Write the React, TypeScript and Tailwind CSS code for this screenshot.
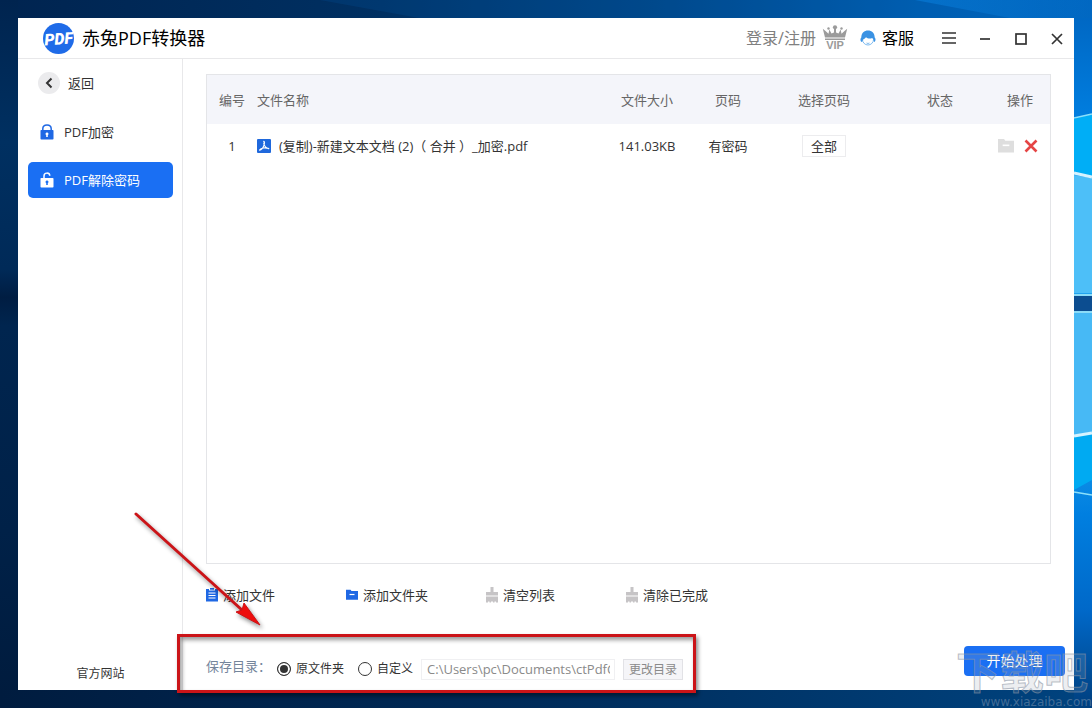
import { useState } from "react";
import type { ReactNode } from "react";

const NAV_ITEMS = [
  { id: "encrypt", label: "PDF加密", open: false },
  { id: "decrypt", label: "PDF解除密码", open: true },
];

const FILES = [
  { id: 1, name: "(复制)-新建文本文档 (2)（ 合并 ）_加密.pdf", size: "141.03KB", pages: "有密码" },
];

function Wallpaper() {
  return (
    <svg className="absolute inset-0 h-full w-full" viewBox="0 0 1092 708" preserveAspectRatio="none" aria-hidden="true">
      <defs>
        <linearGradient id="sky" x1="0" y1="0" x2="1" y2="0">
          <stop offset="0" stopColor="#002450" />
          <stop offset="0.35" stopColor="#003062" />
          <stop offset="0.6" stopColor="#004585" />
          <stop offset="0.85" stopColor="#0060b4" />
          <stop offset="1" stopColor="#0068c4" />
        </linearGradient>
        <linearGradient id="left" x1="0" y1="0" x2="0" y2="1">
          <stop offset="0" stopColor="#00244f" />
          <stop offset="0.2" stopColor="#003061" />
          <stop offset="0.38" stopColor="#002a58" />
          <stop offset="0.42" stopColor="#001d42" />
          <stop offset="0.46" stopColor="#00254f" />
          <stop offset="0.75" stopColor="#002148" />
          <stop offset="1" stopColor="#001b3d" />
        </linearGradient>
        <linearGradient id="ground" x1="0" y1="0" x2="1" y2="0">
          <stop offset="0" stopColor="#001c3f" />
          <stop offset="0.45" stopColor="#002a57" />
          <stop offset="1" stopColor="#00437f" />
        </linearGradient>
        <linearGradient id="beam" x1="0" y1="0" x2="1" y2="0">
          <stop offset="0" stopColor="#0a84e4" stopOpacity="0.5" />
          <stop offset="1" stopColor="#0a84e4" stopOpacity="0.1" />
        </linearGradient>
        <linearGradient id="right" x1="0" y1="0" x2="0" y2="1">
          <stop offset="0" stopColor="#0068c4" />
          <stop offset="0.16" stopColor="#0080e2" />
          <stop offset="0.5" stopColor="#2fb2f5" />
          <stop offset="0.72" stopColor="#007fe0" />
          <stop offset="0.86" stopColor="#0068c8" />
          <stop offset="1" stopColor="#003f7e" />
        </linearGradient>
      </defs>
      <rect width="1092" height="708" fill="url(#sky)" />
      <path d="M320 0 L430 20 H1092 V0 Z" fill="#0059a8" opacity="0.2" />
      <path d="M915 0 L1020 20 H1092 V0 Z" fill="url(#beam)" />
      <rect width="18" height="708" fill="url(#left)" />
      <rect y="690" width="1092" height="18" fill="url(#ground)" />
      <rect x="1074" y="18" width="18" height="690" fill="url(#right)" />
      <path d="M1074 119 L1092 114 V176 L1074 172 Z" fill="#00aef6" />
      <path d="M1074 175 L1092 178 V293 H1074 Z" fill="#4dbff8" />
      <path d="M1074 313 H1092 V432 L1074 435 Z" fill="#47b9f5" />
      <path d="M1074 436 L1092 433 V480 L1074 490 Z" fill="#00aaf2" />
      <rect x="1074" y="296" width="18" height="15" fill="#0c4d90" />
      <path d="M1074 118 L1092 114 M1074 492 L1092 495" stroke="#8be0fb" strokeWidth="1.5" />
      <path d="M1074 173 L1092 177 M1074 436 L1092 433" stroke="#d5f3ff" strokeWidth="3" />
      <path d="M1074 295 H1092 M1074 312 H1092" stroke="#8cdcf8" strokeWidth="2" />
    </svg>
  );
}

function Logo() {
  return (
    <svg width="32" height="32" viewBox="0 0 32 32" aria-hidden="true">
      <circle cx="16.500" cy="16.500" r="15.500" fill="#1f6be8" />
      <text x="16.500" y="22.500" textAnchor="middle" transform="rotate(-4 16 16)" fill="#fff" fontFamily="Roboto, sans-serif" fontSize="16" fontWeight="900" fontStyle="italic">
        PDF
      </text>
    </svg>
  );
}

function VipIcon() {
  return (
    <svg width="26" height="26" viewBox="0 0 26 26" fill="#9b9b9b" aria-hidden="true">
      <circle cx="13" cy="2.300" r="2.100" />
      <circle cx="6.500" cy="3.500" r="1.200" />
      <circle cx="19.500" cy="3.500" r="1.200" />
      <path d="M0.800 3.800 L3.500 6 L6.500 8.800 L7.300 4.500 L9.500 8.500 L12 7.500 V4 H14 V7.500 L16.500 8.500 L18.700 4.500 L19.500 8.800 L22.500 6 L25.200 3.800 L23 12.500 H3 Z" />
      <path d="M3 13.500 H23 V15 H3 Z" />
      <text x="13" y="24" textAnchor="middle" fontFamily="Liberation Sans, sans-serif" fontSize="11" fontWeight="700">
        VIP
      </text>
    </svg>
  );
}

function ServiceIcon() {
  return (
    <svg width="16" height="16" viewBox="0 0 16 16" aria-hidden="true">
      <circle cx="8" cy="9.500" r="5.500" fill="#fff" stroke="#7fbcf0" strokeWidth="1" />
      <path d="M2 12 C0 11.500 0.200 8.500 1.300 7.500 C1.300 3 4.300 0.500 8 0.500 C11.700 0.500 14.700 3 14.700 7.500 C15.800 8.500 16 11.500 14 12 C13.900 10.500 13.300 9 12.200 8 C9.800 9 7.300 8.400 6 7.200 C5.300 8.500 3.600 8.900 3 9.800 C2.600 10.500 2.500 11.300 2 12 Z" fill="#3a92e3" />
      <path d="M6.500 13 Q8 14 9.500 13" stroke="#7fbcf0" fill="none" />
    </svg>
  );
}

function LockIcon({ open }: { open: boolean }) {
  return (
    <svg width="14" height="16" viewBox="0 0 14 16" fill="none" aria-hidden="true">
      <path
        d={open ? "M4 7 V4 C4 0.200 9.600 0.200 9.800 3.800" : "M2.800 6 V4.800 C2.800 -0.300 11.200 -0.300 11.200 4.800 V6"}
        stroke="currentColor"
        strokeWidth="1.500"
      />
      <rect x="0.500" y="6" width="13" height="9.500" rx="0.800" fill="currentColor" />
      <path d="M7 8.500 a1.400 1.400 0 0 1 0.800 2.600 V13 H6.200 V11.100 A1.400 1.400 0 0 1 7 8.500 Z" fill={open ? "#1a6ff3" : "#fff"} />
    </svg>
  );
}

function PdfIcon() {
  return (
    <svg width="14" height="14" viewBox="0 0 14 14" aria-hidden="true">
      <rect width="14" height="14" rx="1" fill="#1f68dc" />
      <path d="M6.600 2.300 C8 2.300 7.400 5.200 6.700 6.900 C6 8.800 4 11 2.600 11.200 M2.500 11 C4 8.800 8.500 8.200 11.800 9.600 M6.700 4 C7 6.500 8.800 8.800 11.600 9.600" stroke="#fff" strokeWidth="1.100" fill="none" strokeLinecap="round" />
    </svg>
  );
}

function FolderIcon({ size }: { size: number }) {
  return (
    <svg width={size} height={size} viewBox="0 0 12 12" aria-hidden="true">
      <path d="M0 0.800 H4.500 L5.500 2 H12 V10.800 H0 Z" fill="currentColor" />
      <path d="M3.500 5.500 H8.500" stroke="#fff" strokeWidth="1.200" />
    </svg>
  );
}

function ClipboardIcon() {
  return (
    <svg width="12" height="14" viewBox="0 0 12 14" aria-hidden="true">
      <rect y="1" width="12" height="12.500" fill="#1f68e4" />
      <rect x="3" y="0" width="6" height="2.500" fill="#fff" />
      <rect x="4" y="0" width="4" height="1.700" fill="#1f68e4" />
      <path d="M2.500 5 H9.500 M2.500 7.500 H9.500 M2.500 10 H9.500" stroke="#fff" strokeWidth="1.100" />
    </svg>
  );
}

function BroomIcon() {
  return (
    <svg width="12" height="16" viewBox="0 0 12 16" fill="#c6c4c6" aria-hidden="true">
      <path d="M4.500 0 H7.500 V5 H12 V8.500 H0 V5 H4.500 Z" />
      <path d="M0 9.500 H12 V15.500 H10 V14.500 H8.500 V15.500 H7 V14.500 H5 V15.500 H3.500 V14.500 H2 V15.500 H0 Z" />
    </svg>
  );
}

function WindowButton({ label, children }: { label: string; children: ReactNode }) {
  return (
    <button type="button" aria-label={label} className="flex h-8 w-9 items-center justify-center text-[#333]">
      <svg width="16" height="16" viewBox="0 0 16 16" fill="none" stroke="currentColor" strokeWidth="1.700" aria-hidden="true">
        {children}
      </svg>
    </button>
  );
}

function ActionButton({ label, icon }: { label: string; icon: ReactNode }) {
  return (
    <button type="button" className="flex w-[140px] items-center gap-[5px]">
      {icon}
      {label}
    </button>
  );
}

export default function App() {
  const [active, setActive] = useState("decrypt");
  const [target, setTarget] = useState("source");

  return (
    <div className="relative flex min-h-screen overflow-hidden bg-[#002a57] p-[18px] font-['Open_Sans','Noto_Sans_CJK_SC',sans-serif] text-[13px] leading-5 text-[#333]">
      <Wallpaper />

      <div className="relative flex flex-1 flex-col bg-white">
        <header className="flex h-[41px] items-center border-b border-[#e8e8ea] pl-6">
          <Logo />
          <h1 className="ml-2 text-[18px] leading-6 text-black">赤兔PDF转换器</h1>
          <button type="button" className="ml-auto flex items-center gap-1.5 text-[16px] leading-6 text-[#808080]">
            登录/注册
            <VipIcon />
          </button>
          <button type="button" className="mr-[17px] ml-3 flex items-center gap-1.5 text-[16px] leading-6 text-black">
            <ServiceIcon />
            客服
          </button>
          <div className="-mr-px flex">
            <WindowButton label="菜单">
              <path d="M1 3 H15 M1 8 H15 M1 13 H15" />
            </WindowButton>
            <WindowButton label="最小化">
              <path d="M3 9 H13" />
            </WindowButton>
            <WindowButton label="最大化">
              <rect x="3" y="4" width="10" height="10" />
            </WindowButton>
            <WindowButton label="关闭">
              <path d="M3 4 L13 14 M13 4 L3 14" />
            </WindowButton>
          </div>
        </header>

        <div className="flex flex-1">
          <aside className="flex w-[165px] flex-col border-r border-[#e8e8ea] pt-[13px] pr-[9px] pb-2 pl-2.5">
            <button type="button" className="ml-2.5 flex items-center gap-2 self-start">
              <span className="flex h-[22px] w-[22px] items-center justify-center rounded-full bg-[#ebebed]">
                <svg width="8" height="12" viewBox="0 0 8 12" fill="none" stroke="#333" strokeWidth="2" aria-hidden="true">
                  <path d="M6.500 1.500 L2 6 L6.500 10.500" />
                </svg>
              </span>
              返回
            </button>
            <nav className="mt-5 flex flex-col gap-3">
              {NAV_ITEMS.map((item) => (
                <button
                  key={item.id}
                  type="button"
                  onClick={() => setActive(item.id)}
                  className={
                    active === item.id
                      ? "flex h-9 items-center gap-2.5 rounded-[5px] bg-[#1a6ff3] pl-3 text-white"
                      : "flex h-9 items-center gap-2.5 rounded-[5px] pl-3 text-[#1f68e4]"
                  }
                >
                  <LockIcon open={item.open} />
                  <span className={active === item.id ? "text-white" : "text-[#333]"}>{item.label}</span>
                </button>
              ))}
            </nav>
            <a href="#" className="mt-auto self-center text-[12px] leading-4">官方网站</a>
          </aside>

          <main className="flex flex-1 flex-col pt-[15px]">
            <div className="mx-[23px] flex-1 border border-[#e4e5e8]">
              <table className="w-full table-fixed">
                <thead className="bg-[#f4f5fa] text-[#666]">
                  <tr className="h-[49px]">
                    <th className="w-[50px] font-normal">编号</th>
                    <th className="text-left font-normal">文件名称</th>
                    <th className="w-[102px] font-normal">文件大小</th>
                    <th className="w-[60px] font-normal">页码</th>
                    <th className="w-[132px] font-normal">选择页码</th>
                    <th className="w-[100px] font-normal">状态</th>
                    <th className="w-[60px] font-normal">操作</th>
                  </tr>
                </thead>
                <tbody>
                  {FILES.map((file) => (
                    <tr key={file.id} className="h-[43px] text-center">
                      <td>{file.id}</td>
                      <td>
                        <div className="flex items-center gap-2">
                          <PdfIcon />
                          {file.name}
                        </div>
                      </td>
                      <td>{file.size}</td>
                      <td>{file.pages}</td>
                      <td>
                        <button type="button" className="border border-[#ececee] px-2">全部</button>
                      </td>
                      <td></td>
                      <td>
                        <div className="flex items-center justify-center gap-2.5 pr-1">
                          <button type="button" aria-label="打开文件夹" className="text-[#dedede]">
                            <FolderIcon size={16} />
                          </button>
                          <button type="button" aria-label="删除">
                            <svg width="14" height="14" viewBox="0 0 14 14" stroke="#e54545" strokeWidth="2.600" aria-hidden="true">
                              <path d="M1.500 1.500 L12.500 12.500 M12.500 1.500 L1.500 12.500" />
                            </svg>
                          </button>
                        </div>
                      </td>
                    </tr>
                  ))}
                </tbody>
              </table>
            </div>

            <div className="flex h-[62px] items-center pl-[23px]">
              <ActionButton label="添加文件" icon={<ClipboardIcon />} />
              <ActionButton
                label="添加文件夹"
                icon={
                  <span className="text-[#1f68e4]">
                    <FolderIcon size={12} />
                  </span>
                }
              />
              <ActionButton label="清空列表" icon={<BroomIcon />} />
              <ActionButton label="清除已完成" icon={<BroomIcon />} />
            </div>

            <div className="flex h-16 items-start justify-between pt-5 pr-[9px] pl-[23px]">
              <div className="mt-2 flex h-[30px] items-center text-[12px]">
                <span className="w-[71px] self-start text-[13px] leading-6 text-[#74859b]">保存目录：</span>
                <div className="flex gap-3.5">
                  {[
                    { id: "source", label: "原文件夹" },
                    { id: "custom", label: "自定义" },
                  ].map((option) => (
                    <label key={option.id} className="flex items-center gap-[5px]">
                      <input
                        type="radio"
                        name="target"
                        checked={target === option.id}
                        onChange={() => setTarget(option.id)}
                        className="h-3.5 w-3.5 appearance-none rounded-full border border-[#333] bg-white checked:bg-[#333] checked:shadow-[inset_0_0_0_2px_#fff]"
                      />
                      {option.label}
                    </label>
                  ))}
                </div>
                <input
                  type="text"
                  aria-label="保存路径"
                  readOnly
                  value="C:\Users\pc\Documents\ctPdfCo"
                  className="ml-2 h-[21px] w-[194px] border border-[#f0f0f2] pr-1 pl-[5px] text-[13px] text-[#8a8a8a]"
                />
                <button type="button" className="ml-2 h-[21px] w-[60px] border border-[#e2e2e6] bg-[#f5f5f8] leading-[19px] text-[#8a8a8a]">
                  更改目录
                </button>
              </div>
              <button type="button" className="h-[30px] w-[101px] rounded-[4px] bg-[#1a6ff3] text-[14px] text-white">
                开始处理
              </button>
            </div>
          </main>
        </div>

        {/* callout drawn over the save-directory row */}
        <div className="pointer-events-none absolute -bottom-[3px] left-[159px] h-[59px] w-[519px] border-[3px] border-[#cb1418] shadow-[2px_3px_4px_rgba(0,0,0,0.45),inset_2px_3px_4px_rgba(0,0,0,0.4)]" />
        <svg className="pointer-events-none absolute bottom-[58px] left-[112px]" width="140" height="124" viewBox="0 0 140 124" aria-hidden="true">
          <g className="drop-shadow-[2px_3px_2px_rgba(0,0,0,0.45)]">
            <path d="M6 6 L112 102" stroke="#cb1418" strokeWidth="3" strokeLinecap="round" />
            <path d="M130 117 L106 104 L112 102 L114 95 Z" fill="#ee0d0d" stroke="#cb1418" strokeWidth="1" />
          </g>
        </svg>
      </div>

      <div className="pointer-events-none absolute right-0 bottom-0 flex flex-col items-end">
        <span className="mr-1 text-[44px] leading-[48px] font-bold text-[#9aa5b5]/20 [-webkit-text-stroke:1px_rgba(140,150,165,0.6)]">下载吧</span>
        <span className="font-['DejaVu_Sans',sans-serif] text-[12px] leading-3 text-[#6f8bab]/60">www.xiazaiba.com</span>
      </div>
    </div>
  );
}
